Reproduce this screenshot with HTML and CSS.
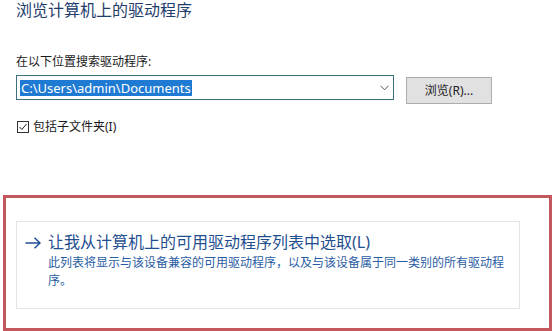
FILE: index.html
```html
<!DOCTYPE html>
<html lang="zh-CN">
<head>
<meta charset="utf-8">
<title>浏览计算机上的驱动程序</title>
<link rel="stylesheet" href="styles.css">
</head>
<body>
<div class="page">
  <div class="top">
    <h1 class="title">浏览计算机上的驱动程序</h1>
    <div class="label">在以下位置搜索驱动程序:</div>
    <div class="row">
      <div class="combo">
        <span class="sel">C:\Users\admin\Documents</span>
        <svg class="chev" width="9" height="6" viewBox="0 0 9 6"><path d="M0.5 0.8 L4.5 4.8 L8.5 0.8" fill="none" stroke="#555" stroke-width="1"/></svg>
      </div>
      <div class="btn">浏览(R)...</div>
    </div>
    <div class="check">
      <span class="box"><svg width="11" height="11" viewBox="0 0 11 11"><path d="M1.8 5.6 L4.3 8.2 L9.3 2.2" fill="none" stroke="#222" stroke-width="1.1"/></svg></span>
      <span>包括子文件夹(I)</span>
    </div>
  </div>
  <div class="mark">
    <div class="option">
      <svg class="arrow" width="16" height="12" viewBox="0 0 16 12"><path d="M0.5 6 H15 M9.5 0.8 L15 6 L9.5 11.2" fill="none" stroke="#1f4f98" stroke-width="1.5"/></svg>
      <div class="otext">
        <div class="otitle">让我从计算机上的可用驱动程序列表中选取(L)</div>
        <div class="odesc">此列表将显示与该设备兼容的可用驱动程序，以及与该设备属于同一类别的所有驱动程序。</div>
      </div>
    </div>
  </div>
</div>
</body>
</html>
```

FILE: styles.css
```css
html, body {
  margin: 0;
  padding: 0;
  background: #fff;
}
body {
  font-family: "Noto Sans", "Noto Sans CJK SC", sans-serif;
  color: #1a1a1a;
  width: 554px;
  height: 331px;
  overflow: hidden;
}
.top {
  padding-left: 16px;
}
.title {
  margin: 0;
  font-size: 16px;
  line-height: 20px;
  font-weight: normal;
  color: #1f3d6c;
}
.label {
  margin-top: 34px;
  font-size: 12px;
  line-height: 16px;
}
.row {
  display: flex;
  align-items: flex-start;
  margin-top: 5px;
  gap: 12px;
}
.combo {
  box-sizing: border-box;
  width: 378px;
  height: 25px;
  border: 1px solid #3b6f7e;
  display: flex;
  align-items: center;
  justify-content: space-between;
  padding: 0 4px 0 3px;
}
.sel {
  background: #1f7ad3;
  color: #fff;
  font-size: 13px;
  line-height: 16px;
  padding: 0 1px;
}
.btn {
  box-sizing: border-box;
  margin-top: 2px;
  width: 86px;
  height: 27px;
  background: #e1e1e1;
  border: 1px solid #adadad;
  font-size: 12px;
  line-height: 25px;
  text-align: center;
  color: #222;
}
.check {
  display: flex;
  align-items: center;
  margin-top: 15px;
  gap: 4px;
  font-size: 12px;
  line-height: 16px;
}
.box {
  box-sizing: border-box;
  width: 12px;
  height: 12px;
  border: 1px solid #333;
  display: flex;
  align-items: center;
  justify-content: center;
  margin-left: 1px;
}
.box svg {
  width: 10px;
  height: 10px;
}
.mark {
  box-sizing: border-box;
  margin: 60px 0 0 3px;
  width: 549px;
  height: 136px;
  border: 3px solid #c2575c;
  padding: 23px 29px 19px 10px;
}
.option {
  box-sizing: border-box;
  height: 88px;
  border: 1px solid #e4e4e4;
  display: flex;
  align-items: flex-start;
  padding: 10px 8px 0 8px;
}
.arrow {
  margin-top: 5px;
  flex: none;
}
.otext {
  margin-left: 7px;
  flex: 1;
}
.otitle {
  font-size: 16px;
  line-height: 20px;
  color: #1f4f8f;
}
.odesc {
  margin-top: 2px;
  font-size: 12px;
  line-height: 18px;
  color: #2a5ca3;
}
```
